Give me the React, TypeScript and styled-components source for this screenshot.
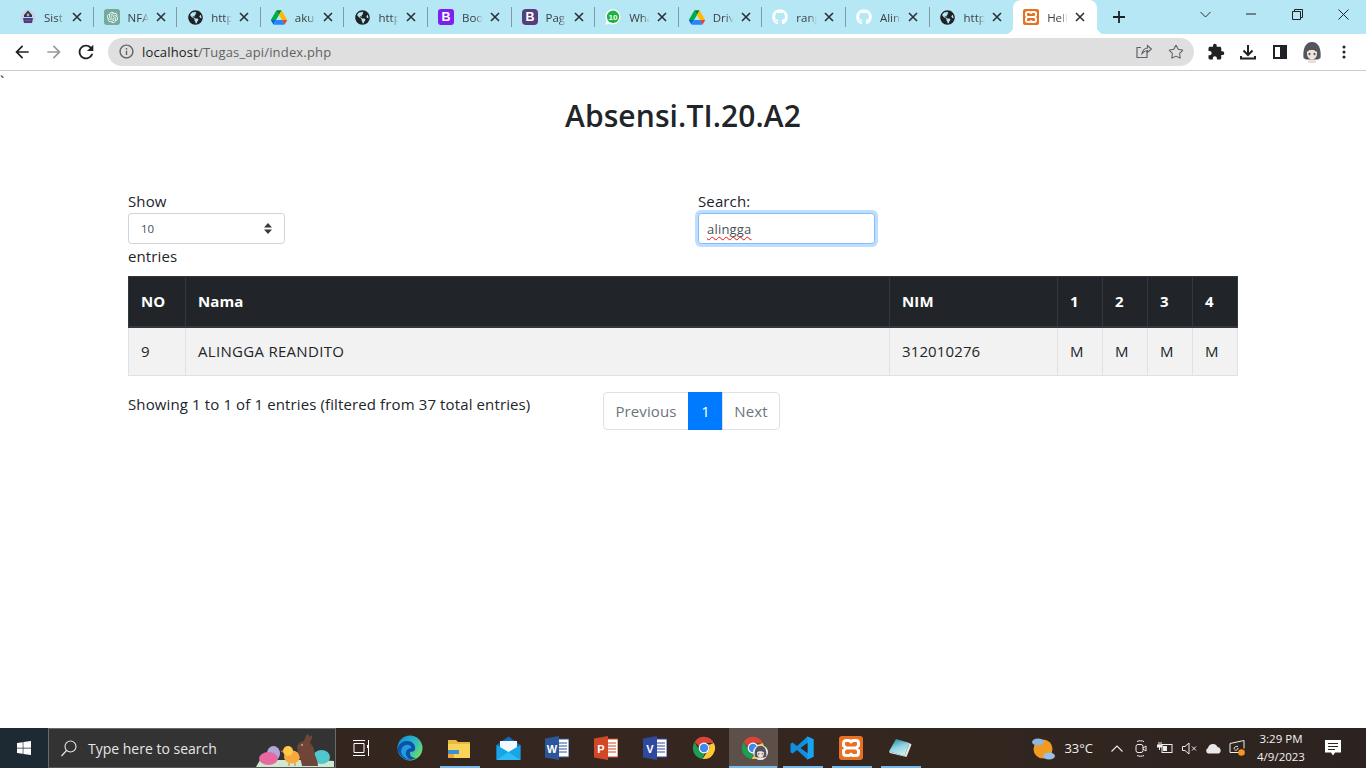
import React from "react";
import styled, { createGlobalStyle } from "styled-components";
import { FaGithub, FaGlobeAmericas, FaWindows } from "react-icons/fa";
import { MdArrowBack, MdArrowForward, MdRefresh, MdInfoOutline, MdExtension } from "react-icons/md";
import { SiOpenai } from "react-icons/si";
import { Star } from "lucide-react";

const UI = `"Open Sans", "Noto Sans", sans-serif`;

const GlobalStyle = createGlobalStyle`
  *, *::before, *::after { box-sizing: border-box; margin: 0; padding: 0; }
  html, body, #root { width: 100%; height: 100%; overflow: hidden; }
  body { font-family: ${UI}; font-size: 15px; color: #212529; background: #fff; }
`;

const Screen = styled.div`
  display: flex;
  flex-direction: column;
  height: 768px;
  width: 1366px;
`;

/* ---------- browser chrome ---------- */

const TabStrip = styled.div`
  display: flex;
  align-items: stretch;
  height: 34px;
  padding-left: 10px;
  background: #b5e7f4;
  flex: none;
`;

const Tab = styled.div<{ $active?: boolean; $last?: boolean }>`
  position: relative;
  flex: 0 0 83.6px;
  display: flex;
  align-items: center;
  padding-left: 10px;
  gap: 8px;
  background: ${(p) => (p.$active ? "#fff" : "transparent")};
  border-radius: ${(p) => (p.$active ? "8px 8px 0 0" : "0")};

  ${(p) =>
    !p.$active && !p.$last
      ? `&::after {
    content: "";
    position: absolute;
    right: 0;
    top: 7px;
    height: 20px;
    width: 1px;
    background: #7f9aa2;
  }`
      : ""}

  ${(p) =>
    p.$active
      ? `&::before, &::after {
    content: "";
    position: absolute;
    bottom: 0;
    width: 8px;
    height: 8px;
  }
  &::before { left: -8px; background: radial-gradient(circle at 0 0, transparent 8px, #fff 8.5px); }
  &::after { right: -8px; background: radial-gradient(circle at 100% 0, transparent 8px, #fff 8.5px); }`
      : ""}
`;

const FavSlot = styled.span`
  width: 16px;
  height: 16px;
  flex: none;
  display: flex;
  align-items: center;
  justify-content: center;
  color: #202124;
`;

const TabTitle = styled.span`
  width: 26px;
  margin-right: -6px;
  flex: none;
  overflow: hidden;
  white-space: nowrap;
  font-size: 11.5px;
  color: #3c4043;
  -webkit-mask-image: linear-gradient(90deg, #000 50%, transparent 80%);
  mask-image: linear-gradient(90deg, #000 50%, transparent 80%);
`;

const TabClose = styled.svg`
  width: 10px;
  height: 10px;
  flex: none;
`;

const NewTab = styled.svg`
  width: 14px;
  height: 14px;
  margin: 10px 0 0 15px;
  flex: none;
`;

const WindowControls = styled.div`
  margin-left: auto;
  display: flex;
  align-items: flex-start;
  height: 28px;
`;

const WindowButton = styled.div`
  width: 46px;
  height: 28px;
  display: flex;
  align-items: center;
  justify-content: center;
`;

const Toolbar = styled.div`
  display: flex;
  align-items: center;
  height: 37px;
  padding-bottom: 1px;
  background: #fff;
  border-bottom: 1px solid #ccc;
  flex: none;
`;

const NavButton = styled.div<{ $muted?: boolean }>`
  width: 32px;
  height: 32px;
  flex: none;
  display: flex;
  align-items: center;
  justify-content: center;
  color: ${(p) => (p.$muted ? "#9a9a9a" : "#202124")};
`;

const NavGroup = styled.div`
  display: flex;
  padding-left: 6px;
  margin-right: 6px;
`;

const Omnibox = styled.div`
  flex: 0 0 1086px;
  height: 28px;
  border-radius: 14px;
  background: #dfdfdf;
  display: flex;
  align-items: center;
  padding: 0 8px 0 10px;
`;

const SiteInfo = styled.span`
  display: flex;
  color: #5f6368;
  margin-right: 7px;
`;

const Url = styled.span`
  font-size: 13px;
  color: #5f6368;
  letter-spacing: 0.17px;
  b { font-weight: 400; color: #202124; }
`;

const OmniIcons = styled.div`
  margin-left: auto;
  display: flex;
  align-items: center;
  gap: 12px;
  color: #5f6368;
`;

const OmniSlot = styled.span`
  width: 20px;
  display: flex;
  justify-content: center;
`;

const ExtGroup = styled.div`
  display: flex;
  padding-left: 6px;
`;

/* ---------- page ---------- */

const Page = styled.main`
  flex: 1;
  background: #fff;
  min-height: 0;
  letter-spacing: 0.12px;
`;

const Stray = styled.div`
  height: 23px;
  font-size: 15px;
  line-height: 20px;
  overflow: hidden;
`;

const Heading = styled.h2`
  font-size: 30px;
  font-weight: 600;
  line-height: 44px;
  text-align: center;
  color: #212529;
  letter-spacing: 0.1px;
`;

const Container = styled.div`
  width: 1110px;
  margin: 51px auto 0;
`;

const ControlsRow = styled.div`
  display: grid;
  grid-template-columns: 570px 1fr;
`;

const FieldLabel = styled.div`
  height: 24px;
  line-height: 24px;
  color: #212529;
`;

const SelectWrap = styled.div`
  position: relative;
  width: 157px;
  height: 31px;
`;

const EntriesSelect = styled.select`
  appearance: none;
  display: block;
  width: 100%;
  height: 100%;
  padding-left: 12px;
  border: 1px solid #ced4da;
  border-radius: 3.2px;
  background: #fff;
  color: #495057;
  font-family: ${UI};
  font-size: 11.5px;
`;

const SelectArrow = styled.svg`
  position: absolute;
  right: 13px;
  top: 10px;
  width: 8px;
  height: 11px;
`;

const SearchInput = styled.div`
  width: 177px;
  height: 31px;
  border: 1px solid #80bdff;
  border-radius: 3.2px;
  box-shadow: 0 0 0 3px #bfdeff;
  background: #fff;
  padding-left: 8px;
  line-height: 31px;
  font-size: 13px;
  letter-spacing: 0.2px;
  color: #495057;
`;

const Misspelled = styled.span`
  text-decoration: underline wavy #e11 1px;
  text-underline-offset: 2px;
  text-decoration-skip-ink: none;
`;

const DataTable = styled.table`
  width: 1109px;
  margin-top: 8px;
  border-collapse: collapse;
  table-layout: fixed;
`;

const HeadCell = styled.th`
  height: 50px;
  padding: 0 12px;
  text-align: left;
  font-size: 15px;
  font-weight: 700;
  color: #fff;
  background: #212529;
  border: 1px solid #32383e;
  border-bottom: 2px solid #32383e;
`;

const Cell = styled.td`
  height: 49px;
  padding: 0 12px;
  font-size: 15px;
  color: #212529;
  background: #f2f2f2;
  border: 1px solid #dee2e6;
`;

const NameCell = styled(Cell)`
  letter-spacing: 0.3px;
`;

const FooterRow = styled.div`
  display: grid;
  grid-template-columns: 475px 1fr;
  margin-top: 16px;
`;

const TableInfo = styled.div`
  line-height: 24px;
  color: #212529;
`;

const Pager = styled.nav`
  display: flex;
  height: 38px;
`;

const PageLink = styled.a<{ $active?: boolean; $w: number }>`
  width: ${(p) => p.$w}px;
  display: flex;
  align-items: center;
  justify-content: center;
  font-size: 15px;
  color: ${(p) => (p.$active ? "#fff" : "#6c757d")};
  background: ${(p) => (p.$active ? "#007bff" : "#fff")};
  border: 1px solid ${(p) => (p.$active ? "#007bff" : "#dee2e6")};
  margin-left: -1px;
  &:first-child { margin-left: 0; border-radius: 4px 0 0 4px; }
  &:last-child { border-radius: 0 4px 4px 0; }
`;

/* ---------- taskbar ---------- */

const Taskbar = styled.footer`
  flex: none;
  height: 40px;
  display: flex;
  align-items: stretch;
  background: linear-gradient(90deg, #33261f 0%, #35271f 60%, #2c2320 100%);
  color: #fff;
`;

const StartButton = styled.div`
  width: 48px;
  flex: none;
  background: #1e2a33;
  display: flex;
  align-items: center;
  justify-content: center;
  color: #fff;
`;

const SearchBox = styled.div`
  width: 288px;
  flex: none;
  display: flex;
  align-items: center;
  background: #333;
  border: 1px solid #6a6a6a;
  border-bottom-color: #555;
  padding-left: 12px;
  overflow: hidden;
`;

const SearchText = styled.span`
  font-size: 14px;
  color: #e6e6e6;
  margin-left: 11px;
  white-space: nowrap;
`;

const EasterArt = styled.svg`
  margin-left: auto;
  align-self: flex-end;
  width: 80px;
  height: 38px;
  flex: none;
`;

const TaskIcons = styled.div`
  display: flex;
  padding-left: 0.5px;
`;

const TaskItem = styled.div<{ $open?: boolean; $focused?: boolean }>`
  position: relative;
  width: 49px;
  display: flex;
  align-items: center;
  justify-content: center;
  background: ${(p) => (p.$focused ? "#5d504a" : "transparent")};

  ${(p) =>
    p.$open
      ? `&::after {
    content: "";
    position: absolute;
    bottom: 0;
    height: 2px;
    left: ${p.$focused ? "0" : "5px"};
    right: ${p.$focused ? "1px" : "4px"};
    background: #76b9ed;
  }`
      : ""}
`;

const AvatarBadge = styled.span`
  position: absolute;
  left: 24px;
  top: 17px;
  display: flex;
  border-radius: 50%;
  background: #eee;
`;

const Tray = styled.div`
  margin-left: auto;
  display: flex;
  align-items: center;
`;

const TrayTemp = styled.span`
  font-size: 13px;
  margin: 0 12px 0 8px;
  color: #f2f2f2;
`;

const TraySlot = styled.span`
  width: 24px;
  display: flex;
  justify-content: center;
`;

const Clock = styled.div`
  width: 60px;
  margin-left: 2px;
  text-align: center;
  font-size: 11.5px;
  line-height: 18px;
  color: #f2f2f2;
`;

const Notify = styled.div`
  width: 42px;
  margin-left: 1px;
  display: flex;
  justify-content: center;
`;

const ShowDesktop = styled.div`
  width: 5px;
  margin-left: 7px;
  border-left: 1px solid #5a504b;
`;

/* ---------- drawings ---------- */

const DriveIcon = () => (
  <svg width="16" height="15" viewBox="0 0 87.3 78">
    <path d="m6.6 66.85 3.85 6.65c.8 1.4 1.95 2.5 3.3 3.3l13.75-23.8h-27.5c0 1.55.4 3.1 1.2 4.5z" fill="#0066da" />
    <path d="m43.65 25-13.75-23.8c-1.35.8-2.5 1.9-3.3 3.3l-25.4 44a9.06 9.06 0 0 0 -1.2 4.5h27.5z" fill="#00ac47" />
    <path d="m73.55 76.8c1.35-.8 2.5-1.9 3.3-3.3l1.6-2.75 7.65-13.25c.8-1.4 1.2-2.95 1.2-4.5h-27.502l5.852 11.5z" fill="#ea4335" />
    <path d="m43.65 25 13.75-23.8c-1.35-.8-2.9-1.2-4.5-1.2h-18.5c-1.6 0-3.15.45-4.5 1.2z" fill="#00832d" />
    <path d="m59.8 53h-32.3l-13.75 23.8c1.35.8 2.9 1.2 4.5 1.2h50.8c1.6 0 3.15-.45 4.5-1.2z" fill="#2684fc" />
    <path d="m73.4 26.5-12.7-22c-.8-1.4-1.95-2.5-3.3-3.3l-13.75 23.8 16.15 28h27.45c0-1.55-.4-3.1-1.2-4.5z" fill="#ffba00" />
  </svg>
);

const SchoolIcon = () => (
  <svg width="16" height="16" viewBox="0 0 16 16">
    <circle cx="8" cy="8" r="7.5" fill="#c9d3e6" />
    <path d="M8 1.5 12 6v2H4V6z" fill="#27306e" />
    <path d="M3 9h10l-1 5H4z" fill="#3a4691" />
    <circle cx="8" cy="6" r="1.4" fill="#d9b23c" />
    <path d="M5.5 11h5v1h-5z" fill="#d43b3b" />
  </svg>
);

const OpenAiIcon = () => (
  <svg width="16" height="16" viewBox="0 0 16 16">
    <rect width="16" height="16" rx="3" fill="#74aa9c" />
    <foreignObject x="2.5" y="2.5" width="11" height="11">
      <SiOpenai size={11} color="#fff" style={{ display: "block" }} />
    </foreignObject>
  </svg>
);

const LetterIcon = ({ bg, r = 3 }: { bg: string; r?: number }) => (
  <svg width="16" height="16" viewBox="0 0 16 16">
    <rect width="16" height="16" rx={r} fill={bg} />
    <text x="8" y="12.3" textAnchor="middle" fontFamily="Liberation Sans" fontSize="12.5" fontWeight="700" fill="#fff">
      B
    </text>
  </svg>
);

const WhatsAppBadge = () => (
  <svg width="16" height="16" viewBox="0 0 16 16">
    <path d="M8 .2a7.6 7.6 0 0 0-6.5 11.5L.4 15.8l4.2-1.1A7.6 7.6 0 1 0 8 .2z" fill="#fff" />
    <circle cx="8" cy="7.8" r="6.2" fill="#1fb141" />
    <text x="8" y="10.6" textAnchor="middle" fontFamily="Liberation Sans" fontSize="8" fontWeight="700" fill="#fff">
      10
    </text>
  </svg>
);

const XamppIcon = ({ size = 16 }: { size?: number }) => (
  <svg width={size} height={size} viewBox="0 0 24 24">
    <rect width="24" height="24" rx="3" fill="#e8701f" />
    <path
      d="M7 4.5h3.500L12 6l1.500-1.500H17A2.500 2.500 0 0 1 19.500 7v2.500L17.500 12l2 2.500V17A2.500 2.500 0 0 1 17 19.500h-3.500L12 18l-1.500 1.500H7A2.500 2.500 0 0 1 4.500 17v-2.500l2-2.500-2-2.500V7A2.500 2.500 0 0 1 7 4.500z"
      fill="none"
      stroke="#fff"
      strokeWidth="3"
      strokeLinejoin="round"
    />
    <path d="M6.500 12h11" stroke="#fff" strokeWidth="3" />
  </svg>
);

const Cross = () => (
  <TabClose viewBox="0 0 10 10">
    <path d="M1 1l8 8M9 1l-8 8" stroke="#2c2f33" strokeWidth="1.6" />
  </TabClose>
);

const Avatar = ({ size = 22 }: { size?: number }) => (
  <svg width={size} height={size} viewBox="0 0 22 22">
    <path d="M2.500 17C1.500 7 5 1 11 1s9.500 6 8.500 16l-2.500 1.500H5z" fill="#53555f" />
    <path d="M6 9h10v4c0 3-2.500 5.500-5 5.500S6 16 6 13z" fill="#f5e2d6" />
    <path d="M5.500 11C8 10 9.500 8 10.500 6c1 2.500 3.500 4 6 5V5h-11z" fill="#53555f" />
    <ellipse cx="8.500" cy="13" rx="1" ry="1.200" fill="#4a5570" />
    <ellipse cx="13.500" cy="13" rx="1" ry="1.200" fill="#4a5570" />
    <path d="M7 22v-2l4-1.500 4 1.500v2z" fill="#e6dfdc" />
  </svg>
);

const ChromeLogo = ({ size = 24 }: { size?: number }) => (
  <svg width={size} height={size} viewBox="0 0 24 24">
    <path d="M2.6 6A11 11 0 0 1 21.800 7H12a5 5 0 0 0-4.800 3.600z" fill="#db4437" />
    <path d="M21.800 7A11 11 0 0 1 10.500 22.900l4.900-7.300A5 5 0 0 0 16.500 9z" fill="#fcc934" />
    <path d="M10.500 22.900A11 11 0 0 1 2.600 6l4.800 8.500a5 5 0 0 0 5.500 2.400z" fill="#1e9e50" />
    <circle cx="12" cy="12" r="5.400" fill="#fff" />
    <circle cx="12" cy="12" r="4.200" fill="#3f88ee" />
  </svg>
);

const EdgeLogo = () => (
  <svg width="26" height="26" viewBox="0 0 26 26">
    <defs>
      <linearGradient id="edgeA" x1="0" y1="0" x2="1" y2="0.7">
        <stop offset="0" stopColor="#0c8fd4" />
        <stop offset="0.55" stopColor="#29b5c9" />
        <stop offset="1" stopColor="#6ce06a" />
      </linearGradient>
    </defs>
    <circle cx="13" cy="13" r="12.500" fill="url(#edgeA)" />
    <path d="M.6 14C1.500 8 7 5.500 11 6c5 .6 8 4.500 7 8.500-.5 2-3 2.500-4.500 2-2 2.500 1 7 5.500 6.500-3 2-9 3-13.500-.5C3 20 .8 17 .6 14z" fill="#0f4fa8" />
    <path d="M7 22c-4-3-4-9 .5-11.500 3-1.700 7-.5 7 2.500-4 .3-7 4-5 8 .8 1.500 2.500 3 5 3.500-3 .2-5.500-1-7.500-2.500z" fill="#1d9ce0" />
  </svg>
);

const ExplorerLogo = () => (
  <svg width="24" height="24" viewBox="0 0 24 24">
    <path d="M1 4h8l2 2h12v3H1z" fill="#e8b93f" />
    <rect x="1" y="8" width="22" height="14" fill="#f9d456" />
    <rect x="1" y="14" width="11" height="4" fill="#3b8fd4" />
    <rect x="1" y="18" width="6" height="4" fill="#e8a936" />
  </svg>
);

const MailLogo = () => (
  <svg width="25" height="24" viewBox="0 0 25 24">
    <path d="M.5 9 12.500.5 24.500 9v14H.5z" fill="#0f6cbd" />
    <path d="M4 5h17v9l-8.500 4L4 14z" fill="#f2f8fd" />
    <path d="M.5 9l12 7 12-7v15H.5z" fill="#17a5e6" />
    <path d="M.5 24l12-8 12 8z" fill="#2bbdf3" />
  </svg>
);

const OfficeDoc = ({ letter, bg, line }: { letter: string; bg: string; line: string }) => (
  <svg width="24" height="24" viewBox="0 0 24 24">
    <rect x="9" y="3" width="15" height="18" fill="#fff" stroke={line} strokeWidth="1" />
    <path d="M14 7h8M14 10h8M14 13h8M14 16h8" stroke={line} strokeWidth="1.200" />
    <path d="M0 2.500 14 0v24L0 21.500z" fill={bg} />
    <text x="7" y="16.500" textAnchor="middle" fontFamily="Liberation Sans" fontWeight="700" fontSize="11" fill="#fff">
      {letter}
    </text>
  </svg>
);

const VsCodeLogo = () => (
  <svg width="24" height="24" viewBox="0 0 24 24">
    <path d="M17.500.5 7 10 2.600 6.600.5 7.700v8.600l2.100 1.100L7 14l10.500 9.500 6-2.700V3.200zM17.500 7v10l-6.700-5z" fill="#0e8fe0" fillRule="evenodd" />
    <path d="M17.500.5 23.500 3.200v17.600l-6 2.700z" fill="#1aa3ee" />
    <path d="M17.500 7v10l-6.700-5z" fill="#33261f" />
  </svg>
);

const NotepadLogo = () => (
  <svg width="24" height="20" viewBox="0 0 24 20">
    <defs>
      <linearGradient id="padA" x1="0.3" y1="0" x2="0.7" y2="1">
        <stop offset="0" stopColor="#2f8ea6" />
        <stop offset="0.45" stopColor="#8fd3e0" />
        <stop offset="1" stopColor="#d7f0f4" />
      </linearGradient>
    </defs>
    <path d="M21.500 5 23.500 6.500 18.500 19 16.500 18z" fill="#e9e7df" />
    <path d="M1 13.500 16.500 18 18.500 19 2 15z" fill="#f4f4f0" />
    <path d="M8 1 21.500 5 16.500 18 1 13.500z" fill="url(#padA)" />
  </svg>
);

const Egg = () => (
  <EasterArt viewBox="0 0 80 38">
    <path d="M1 38 5 31h58l16 1v6z" fill="#cfe8d2" />
    <ellipse cx="18.500" cy="24.500" rx="6.500" ry="7.500" fill="#b5a6d6" />
    <ellipse cx="13.500" cy="29.500" rx="9.500" ry="6.500" fill="#e868a2" />
    <ellipse cx="66.500" cy="28" rx="8.500" ry="7" fill="#4fc7cc" />
    <ellipse cx="37" cy="28" rx="8" ry="6.500" fill="#f9a93c" />
    <circle cx="33" cy="22" r="5" fill="#fcc948" />
    <path d="M28 21l-2.500 1.500 2.500 1z" fill="#e06a1e" />
    <path d="M34 34v3M40 34v3" stroke="#d07a26" strokeWidth="1" />
    <path d="M47 37c-1-7-4-13-5-18 0-3 2-6 7-7 1-3 2-6 4-7 1 0 1 2 1 3 1-1 3-2 3-1 1 1-1 5-2 7 2 2 4 4 4 7 0 5 4 10 4 16z" fill="#6e4536" />
    <circle cx="47" cy="16" r=".8" fill="#eee" />
  </EasterArt>
);

const WeatherIcon = () => (
  <svg width="26" height="26" viewBox="0 0 26 26">
    <circle cx="13" cy="14" r="9.500" fill="#f29b22" />
    <ellipse cx="8" cy="7" rx="6" ry="3.500" fill="#8fb6de" />
    <ellipse cx="19" cy="21" rx="6" ry="3.500" fill="#9cc0e4" />
  </svg>
);

/* ---------- data ---------- */

const tabs: { title: string; icon: React.ReactNode }[] = [
  { title: "Sist", icon: <SchoolIcon /> },
  { title: "NFA", icon: <OpenAiIcon /> },
  { title: "http", icon: <FaGlobeAmericas size={15} /> },
  { title: "aku", icon: <DriveIcon /> },
  { title: "http", icon: <FaGlobeAmericas size={15} /> },
  { title: "Boo", icon: <LetterIcon bg="#7c1ff0" /> },
  { title: "Pag", icon: <LetterIcon bg="#563d7c" r={4} /> },
  { title: "Wha", icon: <WhatsAppBadge /> },
  { title: "Driv", icon: <DriveIcon /> },
  { title: "rang", icon: <FaGithub size={16} color="#fff" /> },
  { title: "Alin", icon: <FaGithub size={16} color="#fff" /> },
  { title: "http", icon: <FaGlobeAmericas size={15} /> },
];

const columns = [57, 704, 168, 45, 45, 45, 45];
const headers = ["NO", "Nama", "NIM", "1", "2", "3", "4"];

export default function App() {
  return (
    <Screen>
      <GlobalStyle />

      <TabStrip>
        {tabs.map((t, i) => (
          <Tab key={i} $last={i === tabs.length - 1}>
            <FavSlot>{t.icon}</FavSlot>
            <TabTitle>{t.title}</TabTitle>
            <Cross />
          </Tab>
        ))}
        <Tab $active>
          <FavSlot>
            <XamppIcon />
          </FavSlot>
          <TabTitle>Hell</TabTitle>
          <Cross />
        </Tab>
        <NewTab viewBox="0 0 14 14">
          <path d="M7 1v12M1 7h12" stroke="#202124" strokeWidth="1.800" />
        </NewTab>
        <WindowControls>
          <WindowButton>
            <svg width="11" height="7" viewBox="0 0 11 7">
              <path d="M.5 1 5.500 6l5-5" fill="none" stroke="#333" strokeWidth="1" />
            </svg>
          </WindowButton>
          <WindowButton>
            <svg width="10" height="2" viewBox="0 0 10 2">
              <path d="M0 1h10" stroke="#222" strokeWidth="1" />
            </svg>
          </WindowButton>
          <WindowButton>
            <svg width="11" height="11" viewBox="0 0 11 11">
              <path d="M.5 2.500h8v8h-8zM2.500 2.500v-2h8v8h-2" fill="none" stroke="#222" strokeWidth="1" />
            </svg>
          </WindowButton>
          <WindowButton>
            <svg width="11" height="11" viewBox="0 0 11 11">
              <path d="M.5.500l10 10M10.500.500l-10 10" stroke="#222" strokeWidth="1" />
            </svg>
          </WindowButton>
        </WindowControls>
      </TabStrip>

      <Toolbar>
        <NavGroup>
          <NavButton>
            <MdArrowBack size={20} />
          </NavButton>
          <NavButton $muted>
            <MdArrowForward size={20} />
          </NavButton>
          <NavButton>
            <MdRefresh size={22} />
          </NavButton>
        </NavGroup>
        <Omnibox>
          <SiteInfo>
            <MdInfoOutline size={17} />
          </SiteInfo>
          <Url>
            <b>localhost</b>/Tugas_api/index.php
          </Url>
          <OmniIcons>
            <OmniSlot>
              <svg width="16" height="15" viewBox="0 0 16 15">
                <path d="M11 6.500V13.500H1V3.500h4M6 9.500c.5-3 2.500-5 5.500-5.500V1.500L15.500 5l-4 3.500V6.500C9 6.700 7.500 7.800 6 9.500z" fill="none" stroke="#5f6368" strokeWidth="1.200" />
              </svg>
            </OmniSlot>
            <OmniSlot>
              <Star size={16} strokeWidth={1.600} />
            </OmniSlot>
          </OmniIcons>
        </Omnibox>
        <ExtGroup>
          <NavButton>
            <MdExtension size={18} />
          </NavButton>
          <NavButton>
            <svg width="16" height="16" viewBox="0 0 16 16">
              <path d="M8 1v10M3.500 6.500 8 11l4.500-4.500M1 12v2.500h14V12" fill="none" stroke="#202124" strokeWidth="2" />
            </svg>
          </NavButton>
          <NavButton>
            <svg width="14" height="14" viewBox="0 0 14 14">
              <rect x="1" y="1" width="12" height="12" fill="none" stroke="#202124" strokeWidth="2" />
              <rect x="7" y="1" width="6" height="12" fill="#202124" />
            </svg>
          </NavButton>
          <NavButton>
            <Avatar />
          </NavButton>
          <NavButton>
            <svg width="4" height="14" viewBox="0 0 4 14">
              <circle cx="2" cy="2" r="1.500" fill="#202124" />
              <circle cx="2" cy="7" r="1.500" fill="#202124" />
              <circle cx="2" cy="12" r="1.500" fill="#202124" />
            </svg>
          </NavButton>
        </ExtGroup>
      </Toolbar>

      <Page>
        <Stray>`</Stray>
        <Heading>Absensi.TI.20.A2</Heading>
        <Container>
          <ControlsRow>
            <div>
              <FieldLabel>Show</FieldLabel>
              <SelectWrap>
                <EntriesSelect defaultValue="10">
                  <option>10</option>
                  <option>25</option>
                  <option>50</option>
                </EntriesSelect>
                <SelectArrow viewBox="0 0 8 11">
                  <path d="M4 0 8 4.500H0zM4 11 0 6.500h8z" fill="#343a40" />
                </SelectArrow>
              </SelectWrap>
              <FieldLabel>entries</FieldLabel>
            </div>
            <div>
              <FieldLabel>Search:</FieldLabel>
              <SearchInput>
                <Misspelled>alingga</Misspelled>
              </SearchInput>
            </div>
          </ControlsRow>

          <DataTable>
            <colgroup>
              {columns.map((w, i) => (
                <col key={i} width={w} />
              ))}
            </colgroup>
            <thead>
              <tr>
                {headers.map((h) => (
                  <HeadCell key={h}>{h}</HeadCell>
                ))}
              </tr>
            </thead>
            <tbody>
              <tr>
                <Cell>9</Cell>
                <NameCell>ALINGGA REANDITO</NameCell>
                <Cell>312010276</Cell>
                <Cell>M</Cell>
                <Cell>M</Cell>
                <Cell>M</Cell>
                <Cell>M</Cell>
              </tr>
            </tbody>
          </DataTable>

          <FooterRow>
            <TableInfo>Showing 1 to 1 of 1 entries (filtered from 37 total entries)</TableInfo>
            <Pager>
              <PageLink $w={86}>Previous</PageLink>
              <PageLink $w={35} $active>
                1
              </PageLink>
              <PageLink $w={58}>Next</PageLink>
            </Pager>
          </FooterRow>
        </Container>
      </Page>

      <Taskbar>
        <StartButton>
          <FaWindows size={16} />
        </StartButton>
        <SearchBox>
          <svg width="16" height="17" viewBox="0 0 16 17">
            <circle cx="9.500" cy="6.500" r="5.500" fill="none" stroke="#e6e6e6" strokeWidth="1.100" />
            <path d="M5.500 10.500 .5 16" stroke="#e6e6e6" strokeWidth="1.200" />
          </svg>
          <SearchText>Type here to search</SearchText>
          <Egg />
        </SearchBox>
        <TaskIcons>
          <TaskItem>
            <svg width="16" height="16" viewBox="0 0 16 16">
              <path d="M0 .5h12M0 15.500h12M1 3.500h10v9H1zM15.500 0v16" fill="none" stroke="#fff" strokeWidth="1" />
              <rect x="14" y="5" width="2.500" height="3" fill="#fff" />
            </svg>
          </TaskItem>
          <TaskItem>
            <EdgeLogo />
          </TaskItem>
          <TaskItem $open>
            <ExplorerLogo />
          </TaskItem>
          <TaskItem>
            <MailLogo />
          </TaskItem>
          <TaskItem>
            <OfficeDoc letter="W" bg="#2b579a" line="#2b579a" />
          </TaskItem>
          <TaskItem>
            <OfficeDoc letter="P" bg="#d24726" line="#d24726" />
          </TaskItem>
          <TaskItem>
            <OfficeDoc letter="V" bg="#2e4a9e" line="#2e4a9e" />
          </TaskItem>
          <TaskItem>
            <ChromeLogo />
          </TaskItem>
          <TaskItem $open $focused>
            <ChromeLogo />
            <AvatarBadge>
              <Avatar size={15} />
            </AvatarBadge>
          </TaskItem>
          <TaskItem $open>
            <VsCodeLogo />
          </TaskItem>
          <TaskItem $open>
            <XamppIcon size={24} />
          </TaskItem>
          <TaskItem $open>
            <NotepadLogo />
          </TaskItem>
        </TaskIcons>
        <Tray>
          <WeatherIcon />
          <TrayTemp>33°C</TrayTemp>
          <TraySlot>
            <svg width="12" height="7" viewBox="0 0 12 7">
              <path d="M.5 6.500 6 1l5.500 5.500" fill="none" stroke="#eee" strokeWidth="1.100" />
            </svg>
          </TraySlot>
          <TraySlot>
            <svg width="12" height="17" viewBox="0 0 12 17">
              <path d="M2 1.500c2-1 5-1 7 0M2 15.500c2 1 5 1 7 0" fill="none" stroke="#eee" />
              <rect x="1" y="4.500" width="7" height="8" rx="2" fill="none" stroke="#eee" />
              <path d="M8 8l3-2v5l-3-2" fill="none" stroke="#eee" />
            </svg>
          </TraySlot>
          <TraySlot>
            <svg width="16" height="12" viewBox="0 0 16 12">
              <rect x="5" y="2.500" width="10" height="8" fill="none" stroke="#eee" />
              <rect x="6" y="4" width="4" height="5" fill="#eee" />
              <path d="M0 3h5v2H0zM2 0v3M4 0v3M2.500 5v3" stroke="#eee" strokeWidth="1" fill="#eee" />
            </svg>
          </TraySlot>
          <TraySlot>
            <svg width="15" height="13" viewBox="0 0 15 13">
              <path d="M.5 4.500h2.500L7 1v11L3 8.500H.5zM10 4.500l4 4M14 4.500l-4 4" fill="none" stroke="#eee" />
            </svg>
          </TraySlot>
          <TraySlot>
            <svg width="17" height="11" viewBox="0 0 17 11">
              <path d="M3 10.500a3 3 0 0 1 0-5.500 5 5 0 0 1 9.500-1 3.500 3.500 0 0 1 1.500 6.500z" fill="#e8e8e8" />
            </svg>
          </TraySlot>
          <TraySlot>
            <svg width="16" height="16" viewBox="0 0 16 16">
              <path d="M1 3.500 15 .5v8M15 12.500H1v-9" fill="none" stroke="#eee" />
              <path d="M5 9c0-2 2-3 4-2.500M9 8c0 2-2 2.500-3.500 2" fill="none" stroke="#eee" />
              <circle cx="12.500" cy="12.500" r="3.300" fill="#f7941d" />
            </svg>
          </TraySlot>
          <Clock>
            3:29 PM
            <br />
            4/9/2023
          </Clock>
          <Notify>
            <svg width="16" height="16" viewBox="0 0 16 16">
              <path d="M0 0h16v12.500h-6L8 15.500l-2-3H0z" fill="#fff" />
              <path d="M3 3.500h10M3 6.500h10M3 9.500h7" stroke="#33261f" strokeWidth="1" />
            </svg>
          </Notify>
          <ShowDesktop />
        </Tray>
      </Taskbar>
    </Screen>
  );
}
